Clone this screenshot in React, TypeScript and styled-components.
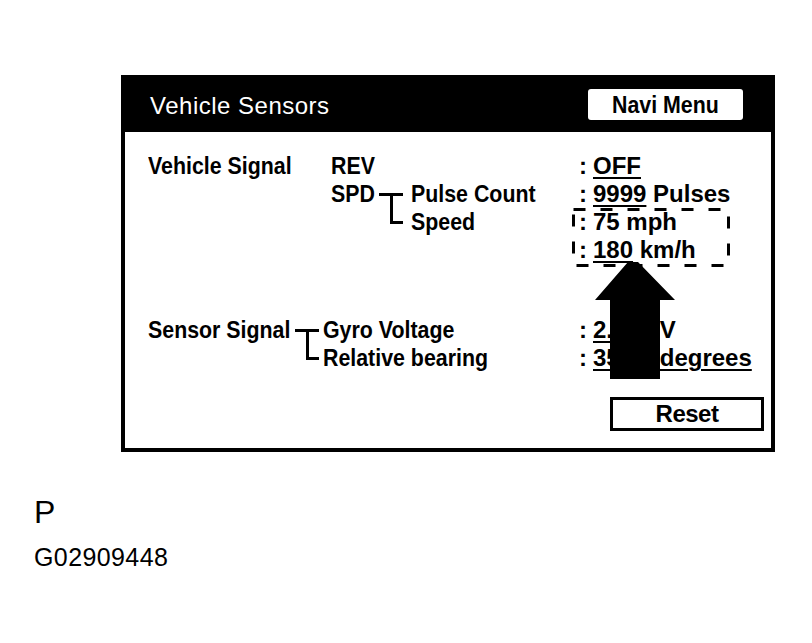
import React from 'react'
import styled, { createGlobalStyle, css } from 'styled-components'

const GlobalStyle = createGlobalStyle`
    html, body {
        margin: 0;
        padding: 0;
        background: #fff;
    }
    body {
        font-family: 'Liberation Sans', Arial, Helvetica, sans-serif;
        color: #000;
    }
`

// the screen font is a narrow grotesque; squeeze the label text to match
const narrow = css`
    transform: scaleX(0.89);
    transform-origin: left center;
`

const Bracket: React.FC<{ className?: string }> = ({ className }) => (
    <svg className={className} width="28" height="56" viewBox="0 0 28 56" fill="none" stroke="#000" strokeWidth="3">
        <line x1="0" y1="14.5" x2="24" y2="14.5" />
        <line x1="12.5" y1="13" x2="12.5" y2="44" />
        <line x1="11" y1="42.5" x2="24" y2="42.5" />
    </svg>
)

const App: React.FC = () => {
    return (
        <Page>
            <GlobalStyle />
            <Panel>
                <Header>
                    <Title>Vehicle Sensors</Title>
                    <NaviButton>
                        <NarrowText>Navi Menu</NarrowText>
                    </NaviButton>
                </Header>
                <Content>
                    <Section>
                        <LeftPart>
                            <Label $width={183}>Vehicle Signal</Label>
                            <Column>
                                <Line>REV</Line>
                                <Row>
                                    <Code>SPD</Code>
                                    <VehicleBracket />
                                    <Column>
                                        <Line>Pulse Count</Line>
                                        <Line>Speed</Line>
                                    </Column>
                                </Row>
                            </Column>
                        </LeftPart>
                        <Values>
                            <ValueLine>
                                <Colon>:</Colon>
                                <Value>
                                    <Under>OFF</Under>
                                </Value>
                            </ValueLine>
                            <ValueLine>
                                <Colon>:</Colon>
                                <Value>
                                    <Under>9999</Under> Pulses
                                </Value>
                            </ValueLine>
                            <Highlight>
                                <DashBox width="158" height="59" viewBox="0 0 158 59">
                                    <rect x="1.5" y="1.5" width="155" height="56" fill="none" stroke="#000" strokeWidth="3" strokeDasharray="12 15" />
                                </DashBox>
                                <ValueLine>
                                    <Colon>:</Colon>
                                    <Value>75 mph</Value>
                                </ValueLine>
                                <ValueLine>
                                    <Colon>:</Colon>
                                    <Value>
                                        <Under>180</Under> km/h
                                    </Value>
                                </ValueLine>
                            </Highlight>
                        </Values>
                    </Section>

                    <Section $gap={52}>
                        <LeftPart>
                            <Label $width={147}>Sensor Signal</Label>
                            <SensorBracket />
                            <Column>
                                <Line>Gyro Voltage</Line>
                                <Line>Relative bearing</Line>
                            </Column>
                        </LeftPart>
                        <Values>
                            <ValueLine>
                                <Colon>:</Colon>
                                <Value>
                                    <Under>2.500</Under> V
                                </Value>
                            </ValueLine>
                            <ValueLine>
                                <Colon>:</Colon>
                                <Value>
                                    <Under>359.9 degrees</Under>
                                </Value>
                            </ValueLine>
                        </Values>
                    </Section>

                    <Footer>
                        <ResetButton>Reset</ResetButton>
                    </Footer>
                </Content>

                <Arrow width="81" height="117" viewBox="0 0 81 117">
                    <polygon points="33,0 43,0 80,38 65,38 65,117 15,117 15,38 0,38" fill="#000" />
                </Arrow>
            </Panel>

            <FigureLetter>P</FigureLetter>
            <FigureCode>G02909448</FigureCode>
        </Page>
    )
}

export default App

const Page = styled.div`
    width: 812px;
    height: 643px;
    box-sizing: border-box;
    padding-top: 75px;
    display: flex;
    flex-direction: column;
    background: #fff;
`

const Panel = styled.div`
    position: relative;
    margin-left: 121px;
    width: 654px;
    height: 377px;
    box-sizing: border-box;
    border: 4px solid #000;
    display: flex;
    flex-direction: column;
    flex-shrink: 0;
`

const Header = styled.div`
    height: 53px;
    flex-shrink: 0;
    background: #000;
    display: flex;
    align-items: center;
    justify-content: space-between;
    padding: 0 28px 0 25px;
`

const Title = styled.div`
    color: #fff;
    font-size: 24px;
    letter-spacing: 0.5px;
    line-height: 1;
`

const NaviButton = styled.div`
    width: 155px;
    height: 31px;
    margin-top: -2px;
    box-sizing: border-box;
    padding-left: 24px;
    background: #fff;
    border-radius: 3px;
    display: flex;
    align-items: center;
    font-size: 24px;
    font-weight: bold;
`

const NarrowText = styled.span`
    display: inline-block;
    white-space: nowrap;
    ${narrow}
`

const Content = styled.div`
    flex: 1;
    display: flex;
    flex-direction: column;
    padding: 20px 7px 17px 23px;
    font-size: 24px;
    font-weight: bold;
    line-height: 28px;
`

const Section = styled.div<{ $gap?: number }>`
    display: grid;
    grid-template-columns: 431px auto;
    margin-top: ${p => p.$gap ?? 0}px;
`

const LeftPart = styled.div`
    display: flex;
    align-items: flex-start;
`

const Label = styled.div<{ $width: number }>`
    width: ${p => p.$width}px;
    flex-shrink: 0;
    white-space: nowrap;
    ${narrow}
`

const Column = styled.div`
    display: flex;
    flex-direction: column;
`

const Row = styled.div`
    display: flex;
    align-items: flex-start;
`

const Line = styled.div`
    height: 28px;
    white-space: nowrap;
    ${narrow}
`

const Code = styled.div`
    width: 48px;
    flex-shrink: 0;
    ${narrow}
`

const VehicleBracket = styled(Bracket)`
    flex-shrink: 0;
    margin-right: 4px;
`

const SensorBracket = styled(Bracket)`
    flex-shrink: 0;
`

const Values = styled.div`
    display: flex;
    flex-direction: column;
`

const ValueLine = styled.div`
    display: flex;
    height: 28px;
    white-space: nowrap;
`

const Colon = styled.span`
    width: 14px;
    flex-shrink: 0;
`

const Value = styled.span``

const Under = styled.span`
    text-decoration: underline;
    text-decoration-thickness: 2px;
    text-underline-offset: 3px;
`

const Highlight = styled.div`
    position: relative;
`

const DashBox = styled.svg`
    position: absolute;
    left: -7px;
    top: 0;
    pointer-events: none;
`

const Footer = styled.div`
    margin-top: auto;
    display: flex;
    justify-content: flex-end;
`

const ResetButton = styled.div`
    width: 154px;
    height: 34px;
    box-sizing: border-box;
    border: 3px solid #000;
    display: flex;
    align-items: center;
    justify-content: center;
    font-size: 24px;
    letter-spacing: -0.5px;
`

const Arrow = styled.svg`
    position: absolute;
    left: 470px;
    top: 183px;
`

const FigureLetter = styled.div`
    margin: 44px 0 0 34px;
    font-size: 32px;
    line-height: 1;
`

const FigureCode = styled.div`
    margin: 17px 0 0 34px;
    font-size: 25px;
    letter-spacing: 0.4px;
    line-height: 1;
`
